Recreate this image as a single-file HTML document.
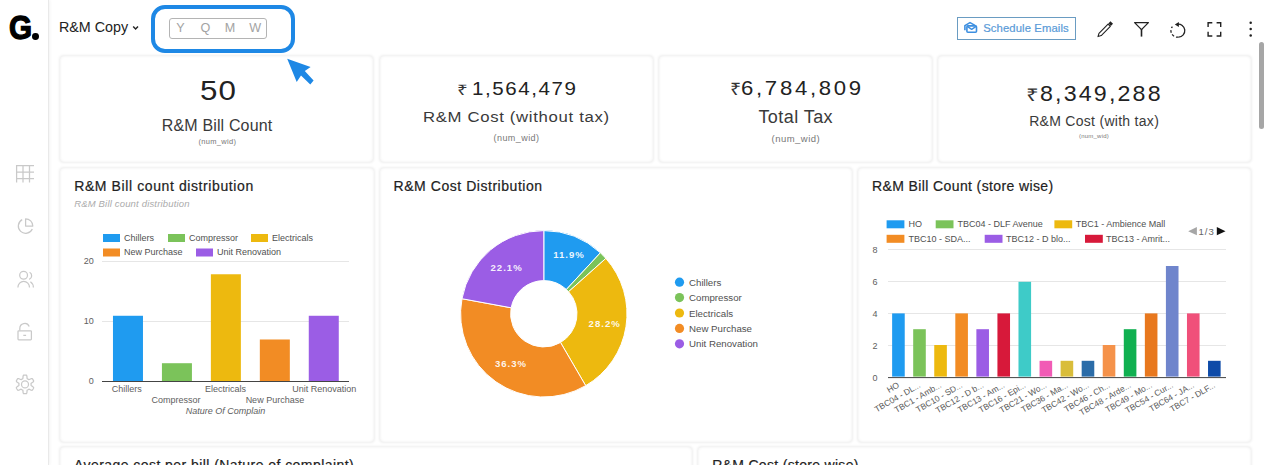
<!DOCTYPE html>
<html lang="en">
<head>
<meta charset="utf-8">
<title>R&amp;M Copy</title>
<style>
*{box-sizing:border-box;margin:0;padding:0}
html,body{width:1280px;height:465px;overflow:hidden;background:#fff}
body{font-family:"Liberation Sans",sans-serif;color:#222;position:relative}
.abs{position:absolute}
#sidebar{position:absolute;left:0;top:0;width:49px;height:465px;border-right:1px solid #e9e9e9;background:#fff;box-shadow:1px 0 3px rgba(0,0,0,.05)}
#logo{position:absolute;left:9px;top:8px;font-weight:bold;font-size:33.5px;line-height:40px;color:#000;white-space:nowrap}
#logo b{display:inline-block;-webkit-text-stroke:1.3px #000;transform-origin:0 0;transform:scaleX(.885)}
#logo i{position:absolute;left:23.2px;top:24.9px;width:6.8px;height:6.8px;border-radius:50%;background:#000;color:transparent;font-size:6px;line-height:6px;overflow:hidden;font-style:normal}
.card{position:absolute;background:#fff;border-radius:4px;box-shadow:0 0 2.5px .3px rgba(0,0,0,.065),inset 0 0 2.5px .3px rgba(0,0,0,.065)}
.t{position:absolute;white-space:nowrap}
#hl{position:absolute;left:151px;top:4.5px;width:143.5px;height:48.3px;border:4.8px solid #1e88e5;border-radius:14px}
#yqmw{position:absolute;left:169px;top:18px;width:98px;height:21px;border:1px solid #b4b4b4;border-radius:3px}
#sched{position:absolute;left:957px;top:17px;width:119px;height:23px;border:1px solid #6a9cc2}
svg{position:absolute;left:0;top:0;overflow:visible}
svg text{font-family:"Liberation Sans",sans-serif}
.lg{font-size:9px;fill:#505050}
.ax{font-size:9px;fill:#606060}
.xl3{font-size:8.4px;fill:#5a5a5a}
.pct{font-size:9.6px;font-weight:bold;fill:#fff;fill-opacity:.92;text-anchor:middle;letter-spacing:1px}
</style>
</head>
<body>
<div id="sidebar">
  <div id="logo"><b>G</b><i>.</i></div>
</div>

<div class="t" style="top:20.40px;font-size:14.3px;line-height:14.3px;left:59.00px;color:#222;">R&amp;M Copy</div>
<div id="hl"></div>
<div id="yqmw">
<div class="t" style="top:3.03px;font-size:12.6px;line-height:12.6px;left:-189.60px;width:400px;text-align:center;color:#a3a3a3;">Y</div>
<div class="t" style="top:3.03px;font-size:12.6px;line-height:12.6px;left:-164.50px;width:400px;text-align:center;color:#a3a3a3;">Q</div>
<div class="t" style="top:3.03px;font-size:12.6px;line-height:12.6px;left:-139.90px;width:400px;text-align:center;color:#a3a3a3;">M</div>
<div class="t" style="top:3.03px;font-size:12.6px;line-height:12.6px;left:-114.70px;width:400px;text-align:center;color:#a3a3a3;">W</div>
</div>
<div id="sched"><div class="t" style="top:5.03px;font-size:11.3px;line-height:11.3px;left:25.20px;letter-spacing:0.1px;color:#5a9bd8;-webkit-text-stroke:.2px #5a9bd8;">Schedule Emails</div></div>

<div class="card" style="left:60px;top:56px;width:313px;height:106px">
<div class="t" style="top:20.07px;font-size:28.5px;line-height:28.5px;left:-42.40px;width:400px;text-align:center;padding-left:1px;letter-spacing:1px;transform:scaleX(1.1);transform-origin:50% 0;">50</div>
<div class="t" style="top:61.96px;font-size:16px;line-height:16px;left:-43.00px;width:400px;text-align:center;padding-left:0.15px;letter-spacing:0.15px;color:#3a3a3a;">R&amp;M Bill Count</div>
<div class="t" style="top:82.35px;font-size:7.5px;line-height:7.5px;left:-42.80px;width:400px;text-align:center;padding-left:0.33px;letter-spacing:0.33px;color:#777;">(num_wid)</div>
</div>
<div class="card" style="left:380px;top:56px;width:273px;height:106px">
<div class="t" style="top:26.93px;font-size:14.5px;line-height:14.5px;left:76.60px;color:#333;transform:scaleX(1.3);transform-origin:0 0;">₹</div>
<div class="t" style="top:23.12px;font-size:19px;line-height:19px;left:91.50px;letter-spacing:1.45px;transform:scaleX(1.08);transform-origin:0 0;">1,564,479</div>
<div class="t" style="top:52.58px;font-size:15.5px;line-height:15.5px;left:-63.70px;width:400px;text-align:center;padding-left:0.62px;letter-spacing:0.62px;color:#3a3a3a;transform:scaleX(1.08);transform-origin:50% 0;">R&amp;M Cost (without tax)</div>
<div class="t" style="top:77.88px;font-size:9px;line-height:9px;left:-63.70px;width:400px;text-align:center;padding-left:0.44px;letter-spacing:0.44px;color:#777;">(num_wid)</div>
</div>
<div class="card" style="left:659px;top:56px;width:273px;height:106px">
<div class="t" style="top:24.81px;font-size:17px;line-height:17px;left:70.60px;color:#333;transform:scaleX(1.15);transform-origin:0 0;">₹</div>
<div class="t" style="top:21.85px;font-size:20.5px;line-height:20.5px;left:82.40px;letter-spacing:2.5px;transform:scaleX(1.08);transform-origin:0 0;">6,784,809</div>
<div class="t" style="top:51.86px;font-size:18px;line-height:18px;left:-63.50px;width:400px;text-align:center;padding-left:0.44px;letter-spacing:0.44px;color:#3a3a3a;">Total Tax</div>
<div class="t" style="top:77.76px;font-size:9.5px;line-height:9.5px;left:-63.40px;width:400px;text-align:center;padding-left:0.46px;letter-spacing:0.46px;color:#777;">(num_wid)</div>
</div>
<div class="card" style="left:938px;top:56px;width:313px;height:106px">
<div class="t" style="top:30.89px;font-size:17.5px;line-height:17.5px;left:87.60px;color:#333;transform:scaleX(1.28);transform-origin:0 0;">₹</div>
<div class="t" style="top:27.50px;font-size:21.5px;line-height:21.5px;left:101.60px;letter-spacing:2.0px;transform:scaleX(1.08);transform-origin:0 0;">8,349,288</div>
<div class="t" style="top:58.15px;font-size:14px;line-height:14px;left:-44.00px;width:400px;text-align:center;padding-left:0.29px;letter-spacing:0.29px;color:#3a3a3a;">R&amp;M Cost (with tax)</div>
<div class="t" style="top:76.72px;font-size:6px;line-height:6px;left:-44.10px;width:400px;text-align:center;padding-left:0.22px;letter-spacing:0.22px;color:#777;">(num_wid)</div>
</div>
<div class="card" style="left:60px;top:168px;width:314px;height:274px">
<div class="t" style="top:10.55px;font-size:14px;line-height:14px;left:14.20px;letter-spacing:0.6px;color:#222;-webkit-text-stroke:.2px #222;">R&amp;M Bill count distribution</div>
<div class="t" style="top:30.96px;font-size:9.5px;line-height:9.5px;left:14.20px;letter-spacing:0.17px;color:#ababab;font-style:italic;">R&amp;M Bill count distribution</div>
</div>
<div class="card" style="left:380px;top:168px;width:472px;height:274px">
<div class="t" style="top:10.55px;font-size:14px;line-height:14px;left:13.60px;letter-spacing:0.54px;color:#222;-webkit-text-stroke:.2px #222;">R&amp;M Cost Distribution</div>
</div>
<div class="card" style="left:858px;top:168px;width:393px;height:274px">
<div class="t" style="top:10.55px;font-size:14px;line-height:14px;left:14.10px;letter-spacing:0.38px;color:#222;-webkit-text-stroke:.2px #222;">R&amp;M Bill Count (store wise)</div>
</div>
<div class="card" style="left:60px;top:447px;width:632px;height:43px">
<div class="t" style="top:10.65px;font-size:14px;line-height:14px;left:14.00px;letter-spacing:0.44px;color:#222;-webkit-text-stroke:.2px #222;">Average cost per bill (Nature of complaint)</div>
</div>
<div class="card" style="left:698px;top:447px;width:553px;height:43px">
<div class="t" style="top:10.65px;font-size:14px;line-height:14px;left:14.20px;letter-spacing:0.31px;color:#222;-webkit-text-stroke:.2px #222;">R&amp;M Cost (store wise)</div>
</div>

<div class="abs" style="left:1259px;top:41.5px;width:5px;height:87px;border-radius:3px;background:#a6a6a6"></div>

<svg width="1280" height="465" viewBox="0 0 1280 465">
  <!-- chevron -->
  <path d="M133.2,26.5 L135.6,29 L138,26.5" fill="none" stroke="#222" stroke-width="1.4"/>
  <!-- cursor arrow -->
  <path d="M287.2,58.7 L310.6,67.1 L304.8,71 L313.6,80.6 L310.3,84.5 L301,75.5 L296.7,82 Z" fill="#1e88e5"/>

  <!-- sidebar icons -->
  <g fill="none" stroke="#c9c9c9" stroke-width="1.25" stroke-linejoin="round">
    <path d="M16,165.5H34M16,172H34M16,178.5H34M16.6,165V182.5M23,165V182.5M29.5,165V182.5"/>
    <path d="M22.2,219.6 A7.3,7.3 0 1 0 32.3,229"/><path d="M25.6,226 V218.8 A7.2,7.2 0 0 1 32.8,226 Z"/>
    <circle cx="23.6" cy="275.2" r="3.9"/><path d="M17.9,287.6 A5.8,6.3 0 0 1 29.5,287.6"/><path d="M29.6,272.2 A4,4 0 0 1 29.2,279.4 M30.4,281.8 A7,7 0 0 1 33.4,287.6"/>
    <rect x="18" y="330.8" width="13.4" height="9" rx="0.8"/><path d="M19.8,330.6 V328.4 A4.9,4.9 0 0 1 29.2,326.4 M23.3,335.4H26.1"/>
    <circle cx="25" cy="384.4" r="3.5"/>
    <path d="M25.00,375.10 L25.49,375.11 L25.97,375.15 L26.45,375.21 L26.83,375.80 L26.99,376.96 L27.04,378.11 L27.19,378.71 L27.48,378.83 L27.77,378.96 L28.05,379.12 L28.32,379.28 L28.59,379.46 L28.84,379.66 L29.42,379.49 L30.44,378.96 L31.53,378.52 L32.23,378.55 L32.52,378.93 L32.80,379.33 L33.05,379.75 L33.29,380.18 L33.50,380.62 L33.68,381.07 L33.36,381.68 L32.44,382.41 L31.47,383.03 L31.02,383.45 L31.07,383.76 L31.09,384.08 L31.10,384.40 L31.09,384.72 L31.07,385.04 L31.02,385.35 L31.47,385.77 L32.44,386.39 L33.36,387.12 L33.68,387.73 L33.50,388.18 L33.29,388.62 L33.05,389.05 L32.80,389.47 L32.52,389.87 L32.23,390.25 L31.53,390.28 L30.44,389.84 L29.42,389.31 L28.84,389.14 L28.59,389.34 L28.32,389.52 L28.05,389.68 L27.77,389.84 L27.48,389.97 L27.19,390.09 L27.04,390.69 L26.99,391.84 L26.83,393.00 L26.45,393.59 L25.97,393.65 L25.49,393.69 L25.00,393.70 L24.51,393.69 L24.03,393.65 L23.55,393.59 L23.17,393.00 L23.01,391.84 L22.96,390.69 L22.81,390.09 L22.52,389.97 L22.23,389.84 L21.95,389.68 L21.68,389.52 L21.41,389.34 L21.16,389.14 L20.58,389.31 L19.56,389.84 L18.47,390.28 L17.77,390.25 L17.48,389.87 L17.20,389.47 L16.95,389.05 L16.71,388.62 L16.50,388.18 L16.32,387.73 L16.64,387.12 L17.56,386.39 L18.53,385.77 L18.98,385.35 L18.93,385.04 L18.91,384.72 L18.90,384.40 L18.91,384.08 L18.93,383.76 L18.98,383.45 L18.53,383.03 L17.56,382.41 L16.64,381.68 L16.32,381.07 L16.50,380.62 L16.71,380.18 L16.95,379.75 L17.20,379.33 L17.48,378.93 L17.77,378.55 L18.47,378.52 L19.56,378.96 L20.58,379.49 L21.16,379.66 L21.41,379.46 L21.68,379.28 L21.95,379.12 L22.23,378.96 L22.52,378.83 L22.81,378.71 L22.96,378.11 L23.01,376.96 L23.17,375.80 L23.55,375.21 L24.03,375.15 L24.51,375.11 Z"/>
  </g>

  <!-- header right icons -->
  <g fill="none" stroke="#3d8fe0" stroke-width="1.6" stroke-linejoin="round">
    <path d="M964.9,30.2 V25.6 L970,22.6 L975,25.4"/>
    <rect x="966.9" y="25.9" width="9.6" height="6.4" rx="1"/>
    <path d="M967.3,26.4 L971.7,29.4 L976.1,26.4" stroke-width="1.4"/>
  </g>
  <g fill="none" stroke="#222" stroke-width="1.2">
    <g transform="translate(1098,36.6) rotate(-45.6)">
      <path d="M0,0 L3,-1.6 H16 V1.6 H3 Z" stroke-width="1.1" stroke-linejoin="round"/>
      <rect x="16.6" y="-1.8" width="3" height="3.6" fill="#222" stroke="none"/>
    </g>
    <path d="M1134.6,22.6 H1148.4 L1141.5,29.6 Z" stroke-width="1.3" stroke-linejoin="round"/><path d="M1141.5,29 V36.6" stroke-width="1.6"/>
    <path d="M1177.2,24.2 A6.5,6.5 0 1 1 1178.6,37.1" stroke-width="1.3"/>
    <path d="M1178.6,37.1 A6.5,6.5 0 0 1 1172.4,26.6" stroke-width="1.3" stroke-dasharray="2.6 2"/>
    <path d="M1174.8,24.5 L1178.9,22 V27 Z" fill="#222" stroke="none"/>
    <path d="M1208.1,27 V22.8 H1212.3 M1216.6,22.8 H1220.7 V27 M1220.7,31.8 V36 H1216.6 M1212.3,36 H1208.1 V31.8" stroke-width="1.4"/>
  </g>
  <g fill="#222"><circle cx="1250.7" cy="22.7" r="1.25"/><circle cx="1250.7" cy="29.1" r="1.25"/><circle cx="1250.7" cy="35.4" r="1.25"/></g>

  <!-- chart 1 -->
  <g>
    <path d="M102,261.5H349M102,321.5H349" stroke="#e6e6e6" stroke-width="1"/>
    <rect x="112.97" y="315.77" width="30" height="65.23" fill="#1f9bf0"/>
<rect x="161.93" y="363.21" width="30" height="17.79" fill="#7bc35a"/>
<rect x="210.88" y="274.26" width="30" height="106.74" fill="#edb90f"/>
<rect x="259.83" y="339.49" width="30" height="41.51" fill="#f28c24"/>
<rect x="308.77" y="315.77" width="30" height="65.23" fill="#9b5de5"/>
    <path d="M102,381.5H349" stroke="#444" stroke-width="1"/>
    <g class="ax" text-anchor="end"><text x="93.8" y="264">20</text><text x="93.8" y="324">10</text><text x="93.8" y="383.8">0</text></g>
    <g class="ax" text-anchor="middle">
      <text x="126.7" y="392">Chillers</text><text x="176.1" y="403">Compressor</text><text x="225.5" y="392">Electricals</text><text x="274.9" y="403">New Purchase</text><text x="324.3" y="392">Unit Renovation</text>
      <text x="225.5" y="414" font-style="italic">Nature Of Complain</text>
    </g>
    <g>
      <rect x="103" y="234" width="17" height="8" fill="#1f9bf0"/><text class="lg" x="124" y="241.1">Chillers</text>
      <rect x="168" y="234" width="17" height="8" fill="#7bc35a"/><text class="lg" x="189" y="241.1">Compressor</text>
      <rect x="251" y="234" width="17" height="8" fill="#edb90f"/><text class="lg" x="272" y="241.1">Electricals</text>
      <rect x="103" y="248.5" width="17" height="8" fill="#f28c24"/><text class="lg" x="124" y="255.2">New Purchase</text>
      <rect x="196" y="248.5" width="17" height="8" fill="#9b5de5"/><text class="lg" x="217" y="255.2">Unit Renovation</text>
    </g>
  </g>

  <!-- chart 2 donut -->
  <g>
    <path d="M543.80,230.60 A83.2,83.2 0 0 1 600.37,252.79 L566.37,289.46 A33.2,33.2 0 0 0 543.80,280.60 Z" fill="#1f9bf0" stroke="#fff" stroke-width="1"/>
<path d="M600.37,252.79 A83.2,83.2 0 0 1 605.86,258.39 L568.57,291.69 A33.2,33.2 0 0 0 566.37,289.46 Z" fill="#7bc35a" stroke="#fff" stroke-width="1"/>
<path d="M605.86,258.39 A83.2,83.2 0 0 1 585.70,385.68 L560.52,342.48 A33.2,33.2 0 0 0 568.57,291.69 Z" fill="#edb90f" stroke="#fff" stroke-width="1"/>
<path d="M585.70,385.68 A83.2,83.2 0 0 1 461.98,298.72 L511.15,307.78 A33.2,33.2 0 0 0 560.52,342.48 Z" fill="#f28c24" stroke="#fff" stroke-width="1"/>
<path d="M461.98,298.72 A83.2,83.2 0 0 1 543.80,230.60 L543.80,280.60 A33.2,33.2 0 0 0 511.15,307.78 Z" fill="#9b5de5" stroke="#fff" stroke-width="1"/>
    <text class="pct" x="569" y="258">11.9%</text>
    <text class="pct" x="604.7" y="326.5">28.2%</text>
    <text class="pct" x="511" y="366.5">36.3%</text>
    <text class="pct" x="506.6" y="270.5">22.1%</text>
    <g class="lg" style="font-size:9.7px">
      <circle cx="679.5" cy="282.2" r="4.6" fill="#1f9bf0"/><text x="689" y="285.7">Chillers</text>
      <circle cx="679.5" cy="297.6" r="4.6" fill="#7bc35a"/><text x="689" y="301.1">Compressor</text>
      <circle cx="679.5" cy="313" r="4.6" fill="#edb90f"/><text x="689" y="316.5">Electricals</text>
      <circle cx="679.5" cy="328.4" r="4.6" fill="#f28c24"/><text x="689" y="331.9">New Purchase</text>
      <circle cx="679.5" cy="343.8" r="4.6" fill="#9b5de5"/><text x="689" y="347.3">Unit Renovation</text>
    </g>
  </g>

  <!-- chart 3 -->
  <g>
    <path d="M888,249.5H1226M888,281.5H1226M888,313.5H1226M888,345.5H1226" stroke="#e6e6e6" stroke-width="1"/>
    <rect x="892.13" y="313.40" width="12.6" height="63.20" fill="#1f9bf0"/>
<rect x="913.19" y="329.20" width="12.6" height="47.40" fill="#7bc35a"/>
<rect x="934.25" y="345.00" width="12.6" height="31.60" fill="#edb90f"/>
<rect x="955.31" y="313.40" width="12.6" height="63.20" fill="#f28c24"/>
<rect x="976.37" y="329.20" width="12.6" height="47.40" fill="#9b5de5"/>
<rect x="997.43" y="313.40" width="12.6" height="63.20" fill="#d7193a"/>
<rect x="1018.49" y="281.80" width="12.6" height="94.80" fill="#3ecbc8"/>
<rect x="1039.55" y="360.80" width="12.6" height="15.80" fill="#f15bb5"/>
<rect x="1060.61" y="360.80" width="12.6" height="15.80" fill="#d9bd3a"/>
<rect x="1081.67" y="360.80" width="12.6" height="15.80" fill="#2b6ca8"/>
<rect x="1102.73" y="345.00" width="12.6" height="31.60" fill="#f5924a"/>
<rect x="1123.79" y="329.20" width="12.6" height="47.40" fill="#10b050"/>
<rect x="1144.85" y="313.40" width="12.6" height="63.20" fill="#e8781e"/>
<rect x="1165.91" y="266.00" width="12.6" height="110.60" fill="#6f85cc"/>
<rect x="1186.97" y="313.40" width="12.6" height="63.20" fill="#f0507a"/>
<rect x="1208.03" y="360.80" width="12.6" height="15.80" fill="#0e4ba8"/>
<text class="xl3" text-anchor="end" transform="translate(899.93,386.80) rotate(-30)">HO</text>
<text class="xl3" text-anchor="end" transform="translate(920.99,386.80) rotate(-30)">TBC04 - DL...</text>
<text class="xl3" text-anchor="end" transform="translate(942.05,386.80) rotate(-30)">TBC1 - Amb...</text>
<text class="xl3" text-anchor="end" transform="translate(963.11,386.80) rotate(-30)">TBC10 - SD...</text>
<text class="xl3" text-anchor="end" transform="translate(984.17,386.80) rotate(-30)">TBC12 - D b...</text>
<text class="xl3" text-anchor="end" transform="translate(1005.23,386.80) rotate(-30)">TBC13 - Am...</text>
<text class="xl3" text-anchor="end" transform="translate(1026.29,386.80) rotate(-30)">TBC16 - Epi...</text>
<text class="xl3" text-anchor="end" transform="translate(1047.35,386.80) rotate(-30)">TBC21 - Wo...</text>
<text class="xl3" text-anchor="end" transform="translate(1068.41,386.80) rotate(-30)">TBC36 - Ma...</text>
<text class="xl3" text-anchor="end" transform="translate(1089.47,386.80) rotate(-30)">TBC42 - Wo...</text>
<text class="xl3" text-anchor="end" transform="translate(1110.53,386.80) rotate(-30)">TBC46 - Ch...</text>
<text class="xl3" text-anchor="end" transform="translate(1131.59,386.80) rotate(-30)">TBC48 - Arde...</text>
<text class="xl3" text-anchor="end" transform="translate(1152.65,386.80) rotate(-30)">TBC49 - Mo...</text>
<text class="xl3" text-anchor="end" transform="translate(1173.71,386.80) rotate(-30)">TBC54 - Cur...</text>
<text class="xl3" text-anchor="end" transform="translate(1194.77,386.80) rotate(-30)">TBC64 - JA...</text>
<text class="xl3" text-anchor="end" transform="translate(1215.83,386.80) rotate(-30)">TBC7 - DLF...</text>
    <path d="M888,377.6H1226" stroke="#444" stroke-width="1"/>
    <g class="ax" text-anchor="middle"><text x="875" y="252.5">8</text><text x="875" y="284.5">6</text><text x="875" y="316.5">4</text><text x="875" y="348.5">2</text><text x="875" y="380.5">0</text></g>
    <g>
      <rect x="886.6" y="220.3" width="17.8" height="8" fill="#1f9bf0"/><text class="lg" x="908.5" y="227.4">HO</text>
      <rect x="935.7" y="220.3" width="17.8" height="8" fill="#7bc35a"/><text class="lg" x="957.5" y="227.4">TBC04 - DLF Avenue</text>
      <rect x="1054.4" y="220.3" width="17.8" height="8" fill="#edb90f"/><text class="lg" x="1075.7" y="227.4">TBC1 - Ambience Mall</text>
      <rect x="886.6" y="234.8" width="17.8" height="8" fill="#f28c24"/><text class="lg" x="908.5" y="241.9">TBC10 - SDA...</text>
      <rect x="984.7" y="234.8" width="17.8" height="8" fill="#9b5de5"/><text class="lg" x="1006" y="241.9">TBC12 - D blo...</text>
      <rect x="1085" y="234.8" width="17.8" height="8" fill="#d7193a"/><text class="lg" x="1106" y="241.9">TBC13 - Amrit...</text>
      <path d="M1196.9,227 V235.3 L1188.2,231.2 Z" fill="#a6a6a6"/>
      <text x="1198.6" y="235.2" style="font-size:9.6px;fill:#666;letter-spacing:.9px">1/3</text>
      <path d="M1216.8,227 V235.3 L1225.5,231.2 Z" fill="#111"/>
    </g>
  </g>
</svg>
</body>
</html>
